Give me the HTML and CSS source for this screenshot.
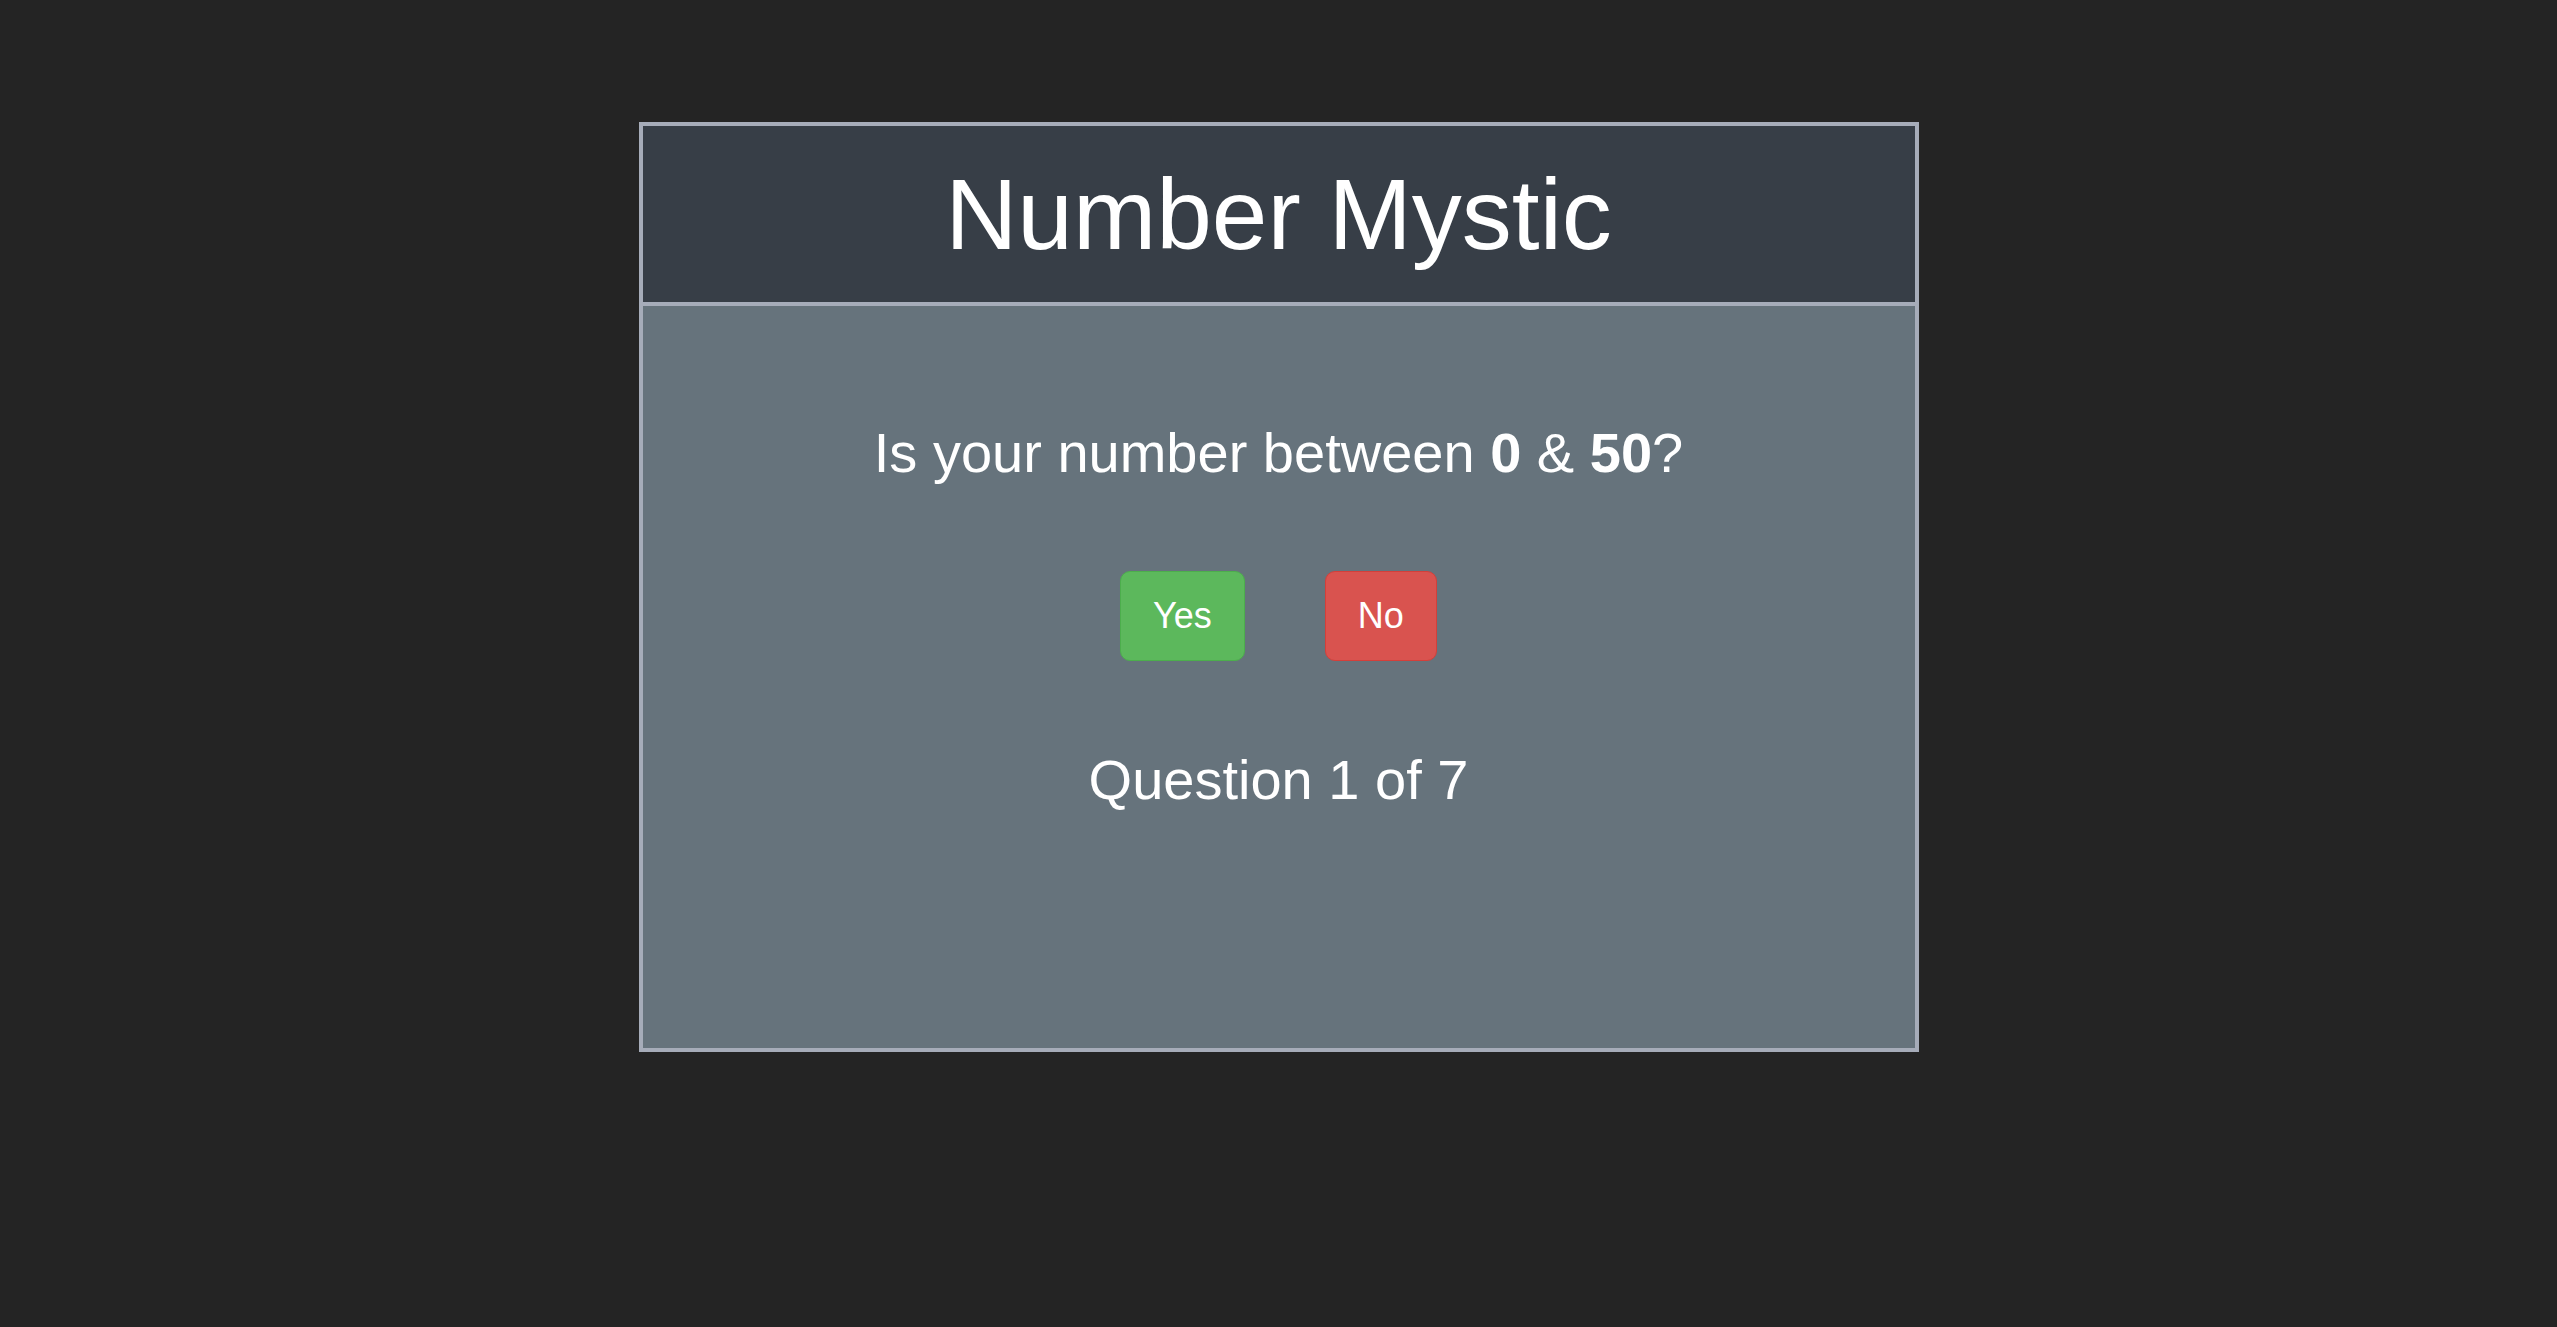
FILE: index.html
```html
<!DOCTYPE html>
<html lang="en">
<head>
    <meta charset="UTF-8">
    <meta name="viewport" content="width=device-width, initial-scale=1.0">
    <title>Number Mystic</title>
    <link rel="stylesheet" href="styles.css">
</head>
<body>
    <div class="container">
        <div class="header">
            <h1>Number Mystic</h1>
        </div>
        <div class="game">
            <p class="question">Is your number between <strong>0</strong> &amp; <strong>50</strong>?</p>
            <div class="buttons">
                <button class="btn btn-yes">Yes</button>
                <button class="btn btn-no">No</button>
            </div>
            <p class="progress">Question 1 of 7</p>
        </div>
    </div>
</body>
</html>
```

FILE: styles.css
```css
body {
    font-family: "Liberation Sans", Arial, sans-serif;
    background-color: #242424;
    color: #fff;
    margin: 0;
    padding: 0;
}

.container {
    box-sizing: border-box;
    width: 1280px;
    margin: 122px auto 0;
    border: 4px solid #a6acb9;
}

.header {
    background-color: #373e47;
    border-bottom: 4px solid #a6acb9;
    padding: 31px 0 30px;
    text-align: center;
}

h1 {
    margin: 0;
    font-size: 100px;
    font-weight: normal;
    line-height: 115px;
}

.game {
    background-color: #66737c;
    height: 742px;
    box-sizing: border-box;
    padding-top: 115px;
    text-align: center;
}

.question,
.progress {
    margin: 0;
    font-size: 56px;
    line-height: 64px;
}

.buttons {
    display: flex;
    justify-content: center;
    gap: 80px;
    margin: 86px 0 87px;
}

.btn {
    font-family: "Liberation Sans", Arial, sans-serif;
    font-size: 36px;
    line-height: 42px;
    padding: 23px 32px;
    color: #fff;
    border-radius: 10px;
    cursor: pointer;
}

.btn-yes {
    background-color: #5cb85c;
    border: 1px solid #4cae4c;
}

.btn-no {
    background-color: #d9534f;
    border: 1px solid #d43f3a;
}
```
